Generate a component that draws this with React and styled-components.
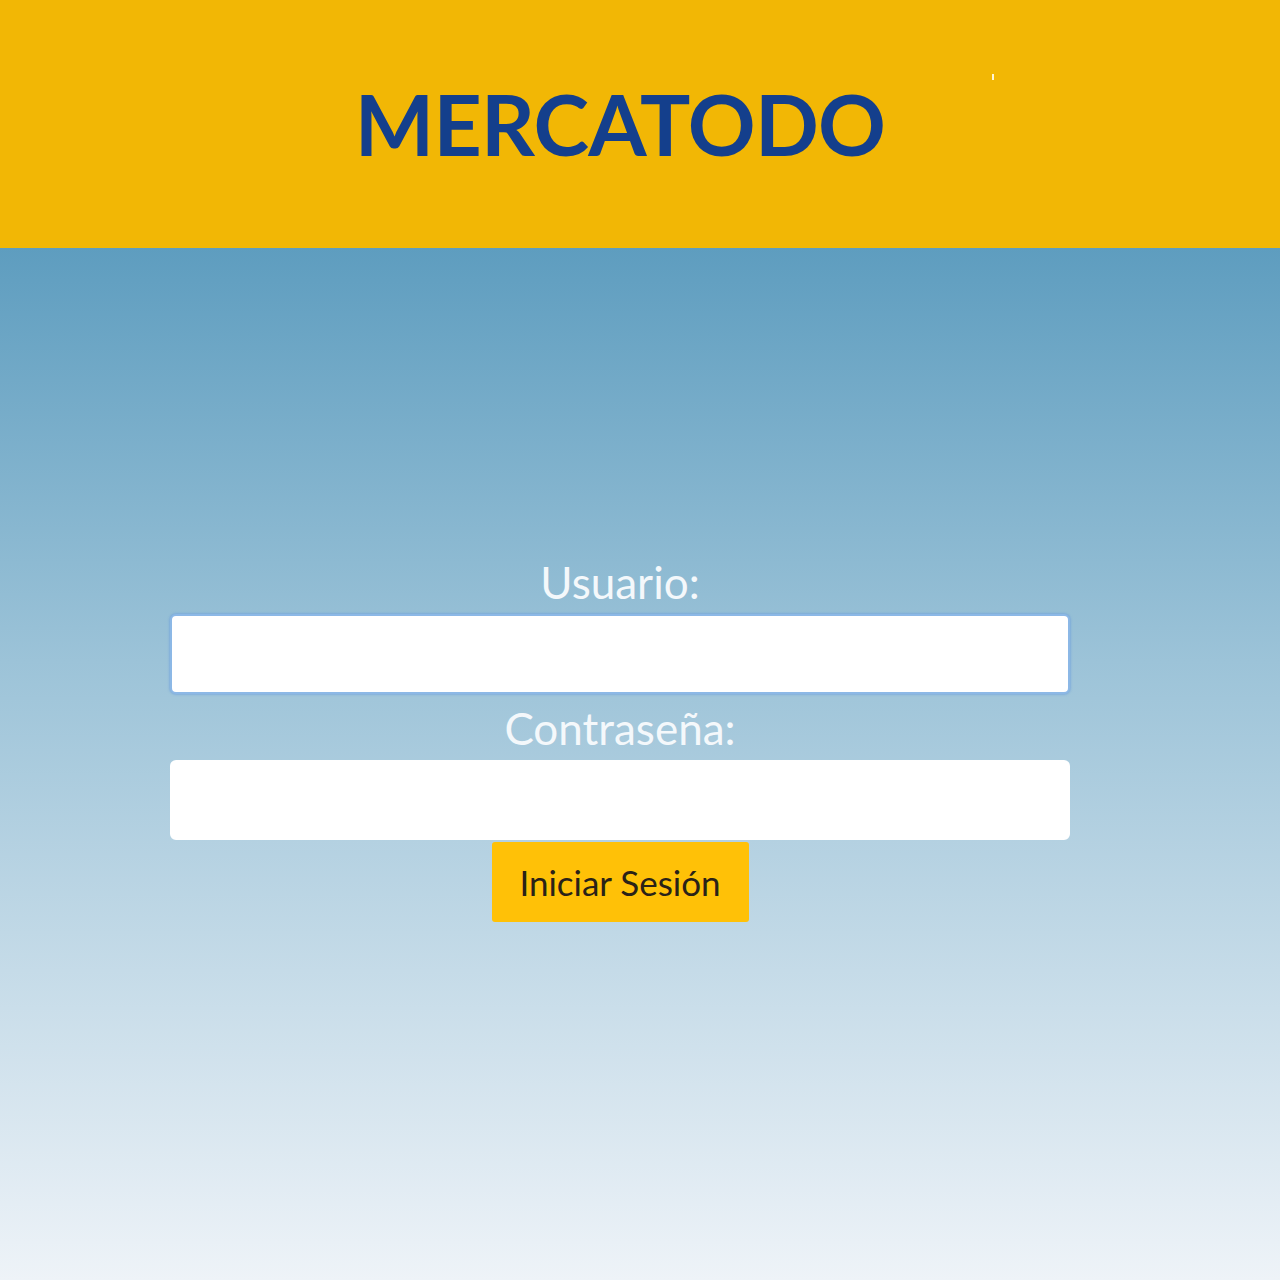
import React from 'react';
import styled, { createGlobalStyle } from 'styled-components';

const GlobalStyle = createGlobalStyle`
  html, body {
    margin: 0;
    padding: 0;
  }
  body {
    font-family: Lato, "Open Sans", sans-serif;
  }
`;

const Page = styled.div`
  display: flex;
  flex-direction: column;
  width: 1280px;
  height: 1280px;
  overflow: hidden;
`;

const Header = styled.header`
  position: relative;
  height: 248px;
  flex-shrink: 0;
  background: #f2b705;
  display: flex;
  align-items: center;
  justify-content: center;
  padding-right: 40px;
`;

const Title = styled.h1`
  margin: 0;
  font-family: Lato, sans-serif;
  font-weight: 700;
  font-size: 84px;
  letter-spacing: -0.7px;
  color: #143f8c;
  line-height: 1;
`;

const Spark = styled.span`
  position: absolute;
  left: 992px;
  top: 74px;
  width: 2px;
  height: 6px;
  background: #fff6d8;
`;

const Main = styled.main`
  flex: 1;
  background: linear-gradient(180deg, #5e9dbf 0%, #9cc3d8 40%, #eef3f8 100%);
  display: flex;
  justify-content: center;
  padding: 310px 40px 0 0;
`;

const Form = styled.form`
  width: 900px;
  display: flex;
  flex-direction: column;
  align-items: center;
`;

const Label = styled.label`
  font-size: 44px;
  line-height: 48px;
  color: #f4f8fb;
  margin-bottom: 8px;
`;

const Input = styled.input`
  box-sizing: border-box;
  width: 900px;
  height: 80px;
  background: #fff;
  border: 2px solid ${({ $focused }) => ($focused ? '#8cb8e6' : '#fff')};
  box-shadow: ${({ $focused }) => ($focused ? '0 0 2px 1px rgba(110, 160, 220, 0.6)' : 'none')};
  border-radius: 6px;
  outline: none;
  margin-bottom: ${({ $gap }) => $gap}px;
`;

const Button = styled.button`
  width: 257px;
  height: 80px;
  background: #ffc107;
  border: none;
  border-radius: 3px;
  font-family: Lato, sans-serif;
  font-size: 35px;
  color: #2a2218;
  cursor: pointer;
`;

export default function App() {
  return (
    <>
      <GlobalStyle />
      <Page>
        <Header>
          <Title>MERCATODO</Title>
          <Spark />
        </Header>
        <Main>
          <Form onSubmit={(e) => e.preventDefault()}>
            <Label htmlFor="usuario">Usuario:</Label>
            <Input id="usuario" type="text" $focused $gap={10} />
            <Label htmlFor="clave">Contraseña:</Label>
            <Input id="clave" type="password" $gap={2} />
            <Button type="submit">Iniciar Sesión</Button>
          </Form>
        </Main>
      </Page>
    </>
  );
}
